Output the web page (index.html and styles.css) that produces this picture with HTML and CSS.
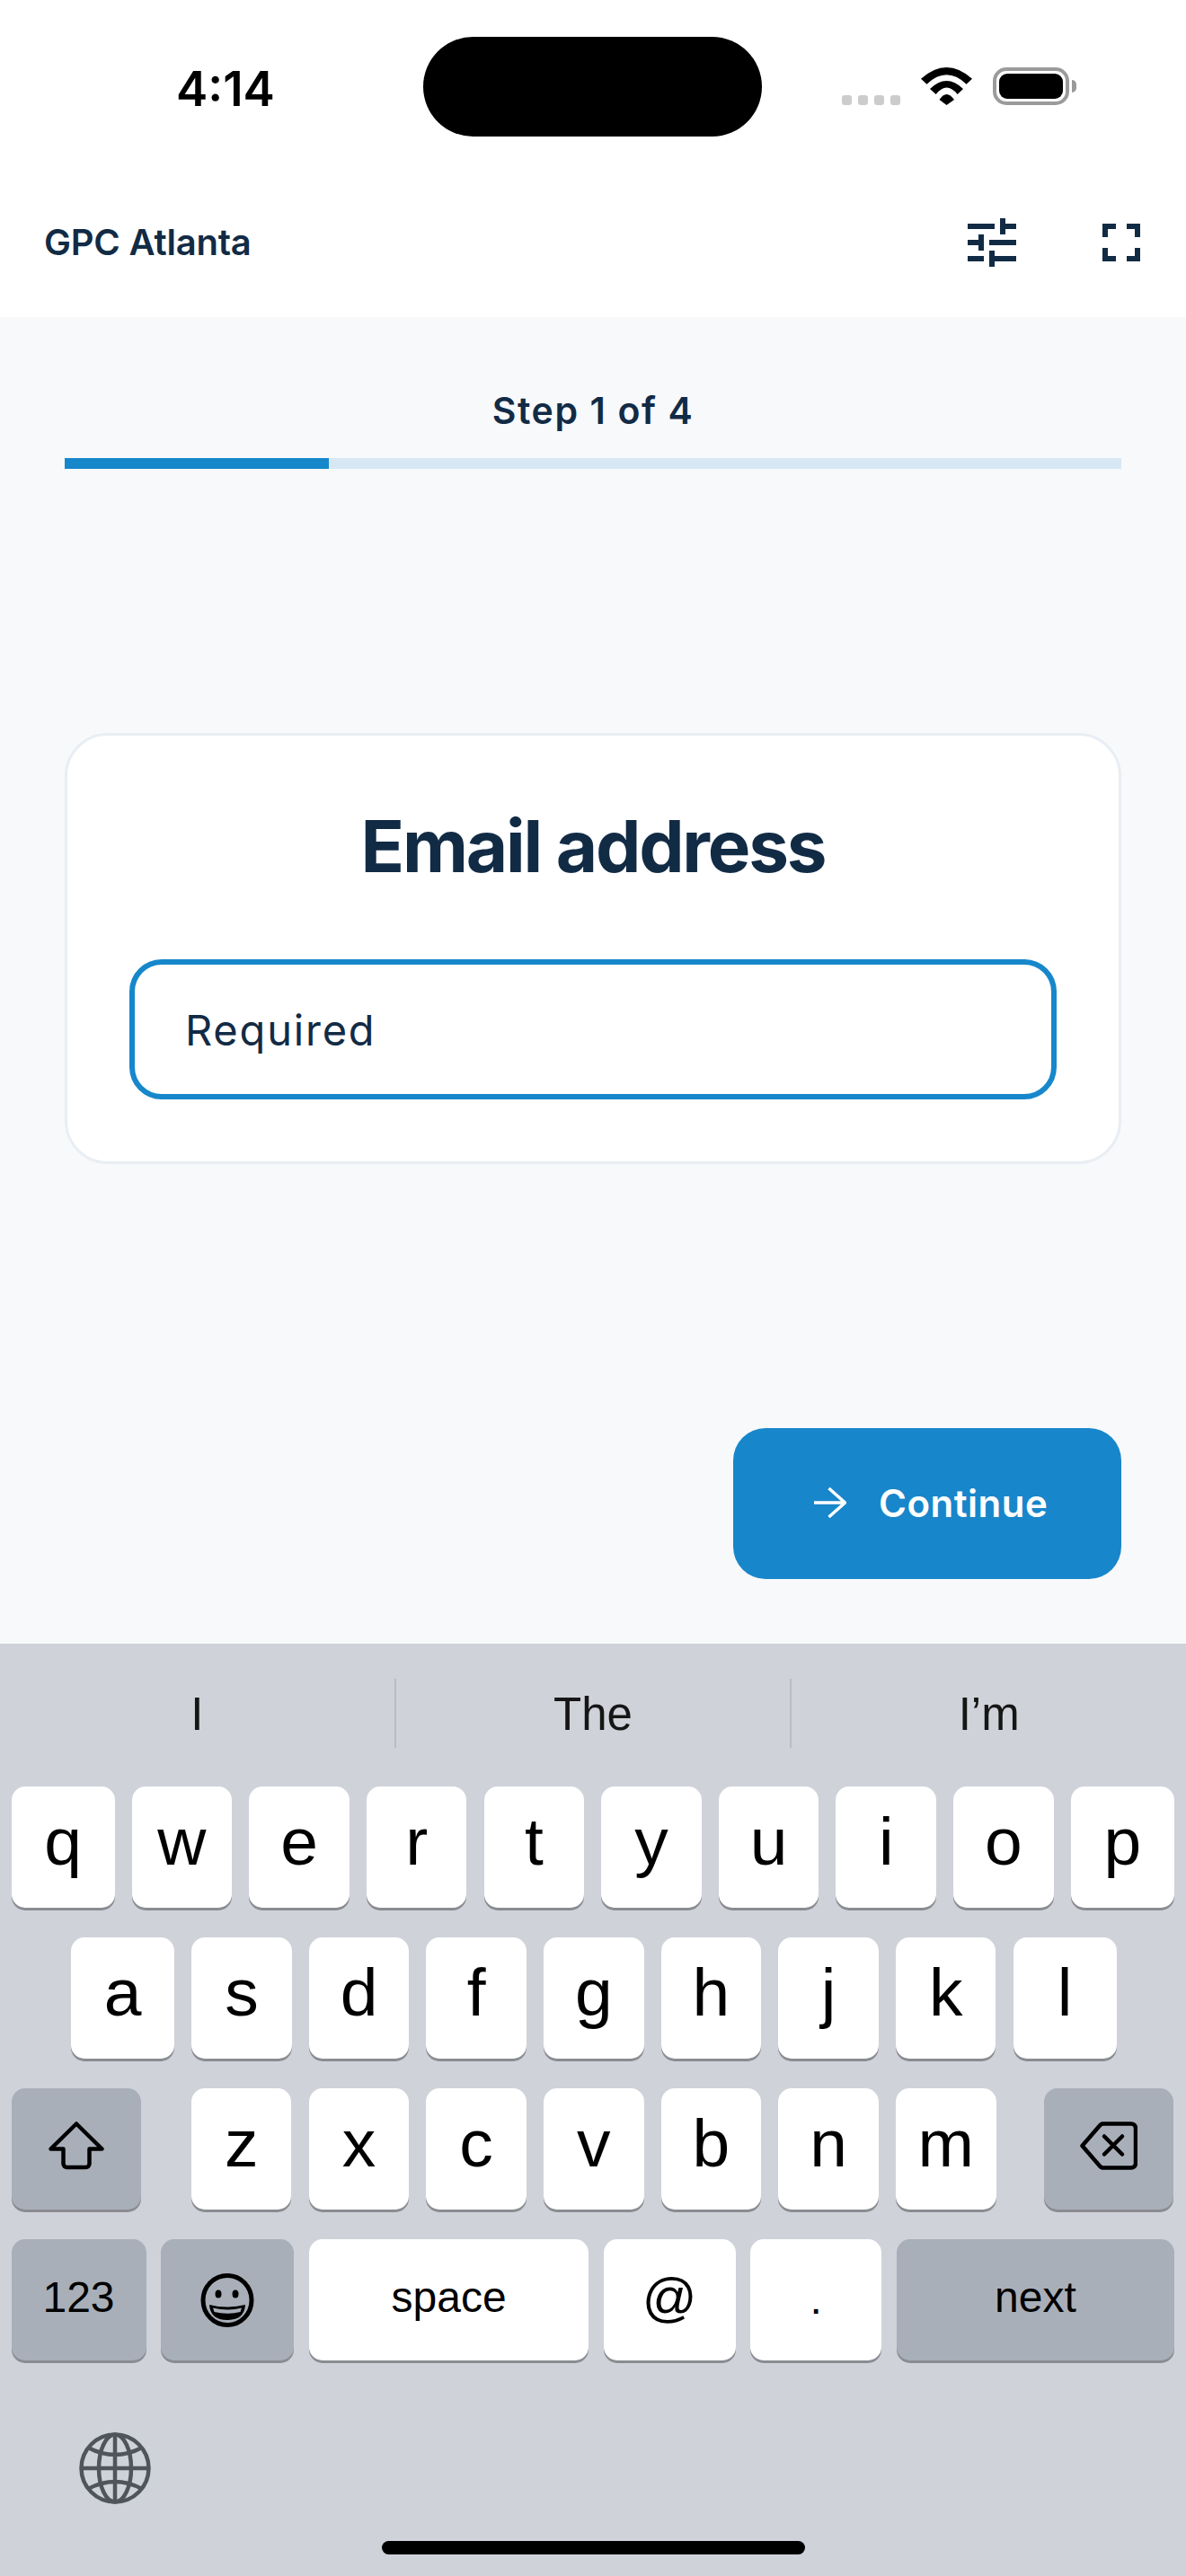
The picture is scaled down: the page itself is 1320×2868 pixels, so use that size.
FILE: index.html
```html
<!DOCTYPE html>
<html lang="en">
<head>
    <title>GPC Atlanta</title>
    <link rel="stylesheet" href="styles.css">
</head>
<body>
<div class="screen">
    <div class="top">
        <div class="status-bar">
            <div class="time">4:14</div>
            <div class="island"></div>
            <div class="status-icons">
                <div class="signal"><span></span><span></span><span></span><span></span></div>
                <svg class="wifi" width="57" height="42" viewBox="0 0 57 42">
                    <path d="M0 12.7Q28.5 -12.7 57 12.7L50.6 18.7Q28.5 -2.1 6.5 18.7Z"/>
                    <path d="M10 24Q28.5 6 47 24L40.7 30Q28.5 15 16.7 30Z"/>
                    <path d="M20.5 36Q28.5 24 37 36L28.5 42Z"/>
                </svg>
                <div class="battery"><div class="battery-level"></div></div>
                <div class="battery-nub"></div>
            </div>
        </div>
        <div class="app-header">
            <div class="app-title">GPC Atlanta</div>
            <div class="header-icons">
                <svg class="header-icon" viewBox="0 0 24 24"><path d="M3 17v2h6v-2H3zM3 5v2h10V5H3zm10 16v-2h8v-2h-8v-2h-2v6h2zM7 9v2H3v2h4v2h2V9H7zm14 4v-2H11v2h10zm-6-4h2V7h4V5h-4V3h-2v6z"/></svg>
                <svg class="header-icon" viewBox="0 0 24 24"><path d="M7 14H5v5h5v-2H7v-3zm-2-4h2V7h3V5H5v5zm12 7h-3v2h5v-5h-2v3zM14 5v2h3v3h2V5h-5z"/></svg>
            </div>
        </div>
    </div>

    <div class="content">
        <div class="step-label">Step 1 of 4</div>
        <div class="progress"><div class="progress-fill"></div></div>
        <div class="card">
            <h1 class="card-title">Email address</h1>
            <div class="input">Required</div>
        </div>
        <button class="continue">
            <svg class="continue-arrow" width="36" height="36" viewBox="0 0 36 36">
                <path d="M0 18H34M16.5 2L34.5 18L16.5 34"/>
            </svg>
            Continue
        </button>
    </div>

    <div class="keyboard">
        <div class="suggestions">
            <div class="suggestion">I</div>
            <div class="suggestion">The</div>
            <div class="suggestion">I’m</div>
        </div>
        <div class="key-row">
            <div class="key edge">q</div><div class="key">w</div><div class="key">e</div><div class="key">r</div><div class="key">t</div>
            <div class="key">y</div><div class="key">u</div><div class="key">i</div><div class="key">o</div><div class="key edge">p</div>
        </div>
        <div class="key-row home-row">
            <div class="key edge">a</div><div class="key">s</div><div class="key">d</div><div class="key">f</div><div class="key">g</div>
            <div class="key">h</div><div class="key">j</div><div class="key">k</div><div class="key edge">l</div>
        </div>
        <div class="key-row">
            <div class="key special action">
                <svg width="62" height="54" viewBox="0 0 62 54" class="key-icon">
                    <path d="M31 2.5L59.5 30.5H45.5V47a4 4 0 0 1-4 4H20.5a4 4 0 0 1-4-4V30.5H2.5Z"/>
                </svg>
            </div>
            <div class="letters">
                <div class="key">z</div><div class="key">x</div><div class="key">c</div><div class="key">v</div>
                <div class="key">b</div><div class="key">n</div><div class="key">m</div>
            </div>
            <div class="key special action delete">
                <svg width="64" height="54" viewBox="0 0 64 54" class="key-icon">
                    <path d="M2.5 27L22 4.5a6 6 0 0 1 3-2H57a5 5 0 0 1 5 5V46.5a5 5 0 0 1-5 5H25a6 6 0 0 1-3-2Z"/>
                    <path d="M27 16.5L47 36.5M47 16.5L27 36.5"/>
                </svg>
            </div>
        </div>
        <div class="key-row bottom-row">
            <div class="key special num">123</div>
            <div class="key special emoji">
                <svg width="60" height="60" viewBox="0 0 60 60">
                    <ellipse class="face" cx="30" cy="30" rx="27" ry="27.5"/>
                    <ellipse cx="20" cy="23" rx="3.5" ry="4.5"/>
                    <ellipse cx="39" cy="23" rx="3.5" ry="4.5"/>
                    <path d="M10 35Q30 40 50 35Q49 52 30 52Q11 52 10 35Z"/>
                    <path class="teeth" d="M14 38.5Q30 42.5 46 38.5L44.5 43Q30 46.5 15.5 43Z"/>
                </svg>
            </div>
            <div class="key space">space</div>
            <div class="key at">@</div>
            <div class="key dot">.</div>
            <div class="key special next">next</div>
        </div>
        <div class="globe-row">
            <svg class="globe" width="80" height="80" viewBox="0 0 80 80">
                <circle cx="40" cy="40" r="37.5"/>
                <ellipse cx="40" cy="40" rx="18" ry="37.5"/>
                <path d="M40 2.5V77.5M2.5 40H77.5M10 17Q40 33 70 17M10 63Q40 47 70 63"/>
            </svg>
        </div>
        <div class="home-indicator"></div>
    </div>
</div>
</body>
</html>
```
FILE: styles.css
```css
body {
    margin: 0;
    background-color: #f7f9fb;
    font-family: Inter, "Liberation Sans", sans-serif;
    color: #122b45;
}

.screen {
    width: 1320px;
    height: 2868px;
    display: flex;
    flex-direction: column;
    overflow: hidden;
}

/* status bar + app header */
.top {
    background: white;
    height: 353px;
}

.status-bar {
    height: 152px;
    box-sizing: border-box;
    padding: 41px 0 0 196px;
    display: flex;
    align-items: flex-start;
}

.time {
    width: 275px;
    padding-top: 36px;
    font-size: 53px;
    line-height: 44px;
    font-weight: 600;
    color: black;
}

.island {
    width: 377px;
    height: 111px;
    border-radius: 56px;
    background: black;
}

.status-icons {
    display: flex;
    align-items: flex-end;
    margin: 34px 0 0 89px;
}

.signal {
    display: flex;
    gap: 7px;
}

.signal span {
    width: 11px;
    height: 11px;
    border-radius: 3px;
    background: #cccccc;
}

.wifi {
    margin-left: 23px;
}

.battery {
    width: 85px;
    height: 42px;
    margin-left: 23px;
    box-sizing: border-box;
    border: 4px solid #9b9b9b;
    border-radius: 15px;
    padding: 3px;
}

.battery-level {
    height: 100%;
    background: black;
    border-radius: 9px;
}

.battery-nub {
    width: 5px;
    height: 14px;
    margin: 0 0 14px 3px;
    background: #999999;
    border-radius: 0 7px 7px 0;
}

.app-header {
    height: 201px;
    box-sizing: border-box;
    padding: 35px 36px 0 49px;
    display: flex;
    align-items: center;
    justify-content: space-between;
}

.app-title {
    font-size: 40px;
    font-weight: 600;
    letter-spacing: -0.2px;
    margin-top: -2px;
}

.header-icons {
    display: flex;
    gap: 72px;
}

.header-icon {
    width: 72px;
    height: 72px;
    fill: #122b45;
}

/* step form */
.content {
    flex: 1;
    box-sizing: border-box;
    padding: 80px 72px 0;
    display: flex;
    flex-direction: column;
}

.step-label {
    text-align: center;
    font-size: 41px;
    line-height: 48px;
    font-weight: 600;
    letter-spacing: 1.6px;
}

.progress {
    height: 12px;
    margin-top: 29px;
    background: #d7e7f3;
}

.progress-fill {
    width: 25%;
    height: 100%;
    background: #1787cb;
}

.card {
    margin-top: 294px;
    height: 480px;
    box-sizing: border-box;
    padding: 69px;
    background: white;
    border: 3px solid #e8eef3;
    border-radius: 48px;
}

.card-title {
    margin: 0;
    padding-top: 6px;
    text-align: center;
    font-size: 80px;
    line-height: 96px;
    font-weight: 700;
    letter-spacing: -2.2px;
    height: 174px;
}

.input {
    height: 156px;
    box-sizing: border-box;
    padding: 0 56px;
    display: flex;
    align-items: center;
    border: 6px solid #1787cb;
    border-radius: 36px;
    font-size: 47px;
    letter-spacing: 1.8px;
}

.continue {
    width: 432px;
    height: 168px;
    margin: 294px 0 0 auto;
    padding: 0 0 2px 90px;
    display: flex;
    align-items: center;
    gap: 36px;
    border: none;
    border-radius: 36px;
    background: #1886ca;
    color: white;
    font-family: inherit;
    font-size: 42px;
    font-weight: 600;
    letter-spacing: 0.5px;
}

.continue-arrow {
    fill: none;
    stroke: white;
    stroke-width: 3.5;
}

/* keyboard */
.keyboard {
    height: 1038px;
    background: #cfd2d9;
    font-family: "Liberation Sans", Arial, sans-serif;
    color: black;
}

.suggestions {
    height: 159px;
    display: flex;
    font-size: 51px;
    color: #161616;
}

.suggestion {
    flex: 1;
    height: 75px;
    margin-top: 39px;
    padding-top: 2px;
    display: flex;
    align-items: center;
    justify-content: center;
    border-left: 2px solid #b9bcc3;
}

.suggestion:first-child {
    border-left: none;
}

.key-row {
    display: flex;
    gap: 19.15px;
    padding-left: 12.5px;
    margin-bottom: 33px;
}

.home-row {
    padding-left: 79px;
}

.key {
    width: 111.5px;
    height: 135px;
    box-sizing: border-box;
    padding-bottom: 14px;
    display: flex;
    align-items: center;
    justify-content: center;
    background: white;
    border-radius: 15px;
    box-shadow: 0 3px 0 #8a8c91;
    font-size: 75px;
}

.key.edge {
    width: 115px;
}

.key.special {
    background: #a9afb9;
}

.key.action {
    width: 144px;
    padding: 0 0 7px;
}

.letters {
    display: flex;
    gap: 19.2px;
    margin-left: 37.3px;
}

.key.delete {
    margin-left: 34.5px;
}

.key-icon {
    fill: none;
    stroke: black;
    stroke-width: 4.5;
    stroke-linejoin: round;
    stroke-linecap: round;
}

.bottom-row {
    gap: 16.8px;
    margin-bottom: 0;
}

.bottom-row .key {
    font-size: 48px;
    padding-bottom: 6px;
}

.key.num {
    width: 150px;
}

.key.emoji {
    width: 148px;
    padding: 0;
}

.face {
    fill: none;
    stroke: black;
    stroke-width: 5;
}

.teeth {
    fill: #a9afb9;
}

.key.space {
    width: 311px;
}

.bottom-row .key.at {
    width: 146.7px;
    font-size: 60px;
}

.bottom-row .key.dot {
    width: 145.7px;
    font-size: 48px;
    padding-top: 4px;
}

.key.next {
    width: 309px;
}

.globe-row {
    padding: 80px 0 0 87.5px;
    height: 80px;
}

.globe {
    fill: none;
    stroke: #50555c;
    stroke-width: 4.5;
}

.home-indicator {
    width: 471px;
    height: 15px;
    margin: 41px auto 0;
    border-radius: 8px;
    background: black;
}
```
